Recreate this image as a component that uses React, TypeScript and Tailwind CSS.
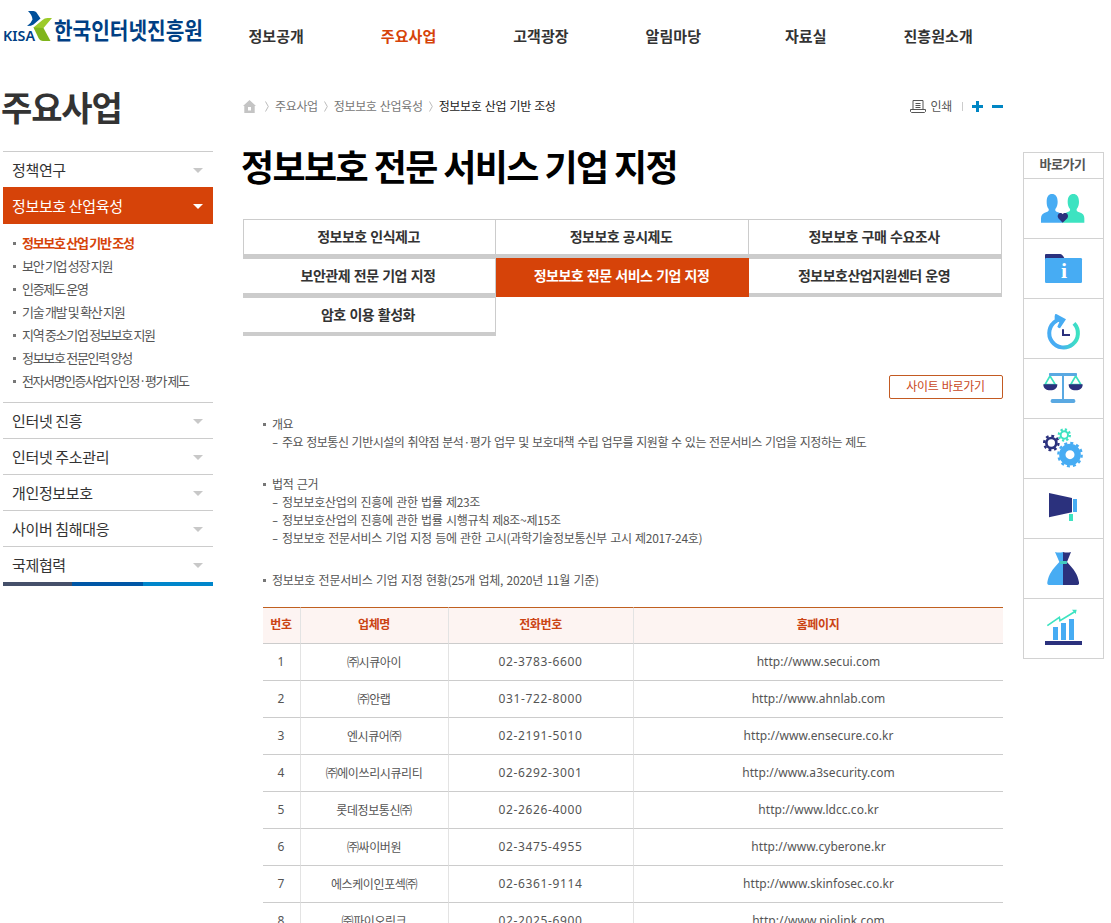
import type { ReactNode } from 'react';

const NAV = ['정보공개', '주요사업', '고객광장', '알림마당', '자료실', '진흥원소개'];

const SUB_MENU = [
  '정보보호 산업 기반 조성',
  '보안 기업 성장 지원',
  '인증제도 운영',
  '기술 개발 및 확산 지원',
  '지역 중소기업 정보보호 지원',
  '정보보호 전문인력 양성',
  '전자서명인증사업자 인정·평가 제도',
];

const SIDE_MENU = ['인터넷 진흥', '인터넷 주소관리', '개인정보보호', '사이버 침해대응', '국제협력'];

const COMPANIES = [
  { name: '㈜시큐아이', tel: '02-3783-6600', url: 'http://www.secui.com' },
  { name: '㈜안랩', tel: '031-722-8000', url: 'http://www.ahnlab.com' },
  { name: '엔시큐어㈜', tel: '02-2191-5010', url: 'http://www.ensecure.co.kr' },
  { name: '㈜에이쓰리시큐리티', tel: '02-6292-3001', url: 'http://www.a3security.com' },
  { name: '롯데정보통신㈜', tel: '02-2626-4000', url: 'http://www.ldcc.co.kr' },
  { name: '㈜싸이버원', tel: '02-3475-4955', url: 'http://www.cyberone.kr' },
  { name: '에스케이인포섹㈜', tel: '02-6361-9114', url: 'http://www.skinfosec.co.kr' },
  { name: '㈜파이오링크', tel: '02-2025-6900', url: 'http://www.piolink.com' },
];

function Logo() {
  return (
    <svg width="210" height="50" viewBox="0 0 210 50" className="block shrink-0">
      <path d="M28 11h5.500q2 0 3 1.500l4 6-7 6q-2 1.500-6.500 1.500 4-2.500 5.500-6.500 0-4-4.500-8.500z" fill="#00509a" />
      <path d="M52 18h-4.500q-3 0-5 2l-9 7.500 3.500 5 6.500-4.500z" fill="#9ccb2a" />
      <path d="M33.500 27.500 43.500 28 50.500 41h-7.500q-3 0-4.500-3z" fill="#7fb51c" />
      <text x="3" y="41" textLength="32" lengthAdjust="spacingAndGlyphs" fontSize="14" fontWeight="600" fill="#003f84" className="font-['Noto_Sans',sans-serif]">
        KISA
      </text>
      <text x="54" y="38.500" textLength="149" lengthAdjust="spacingAndGlyphs" fontSize="23" fontWeight="700" fill="#003f84">
        한국인터넷진흥원
      </text>
    </svg>
  );
}

function Header() {
  return (
    <header className="flex h-[74px]">
      <Logo />
      <nav className="flex h-[72px] items-center">
        {NAV.map((item) => (
          <a
            key={item}
            className={`w-[132.4px] text-center text-[15px] font-bold tracking-[0.1px] ${
              item === '주요사업' ? 'text-[#d64309]' : 'text-[#333]'
            }`}
          >
            {item}
          </a>
        ))}
      </nav>
    </header>
  );
}

function SideItem({ label, active = false }: { label: string; active?: boolean }) {
  return (
    <div
      className={`flex items-center justify-between pt-px pr-[10px] pl-[9px] text-[15px] tracking-[-0.35px] ${
        active ? 'h-[37px] bg-[#d64309] text-white' : 'h-9 border-t border-[#ccc] text-[#333]'
      }`}
    >
      <span>{label}</span>
      <svg width="10" height="5" viewBox="0 0 10 5" className={active ? 'text-white' : 'text-[#c8c8c8]'}>
        <path d="M0 0h10L5 5z" fill="currentColor" />
      </svg>
    </div>
  );
}

function Sidebar() {
  return (
    <aside className="w-[213px] shrink-0 pl-[3px]">
      <h2 className="-ml-[2px] h-[77px] pt-[8px] text-[34px] leading-[50px] font-bold tracking-[-1.1px] whitespace-nowrap text-[#333]">
        주요사업
      </h2>
      <SideItem label="정책연구" />
      <SideItem label="정보보호 산업육성" active />
      <ul className="pt-[7px] pb-[10px] pl-[10px]">
        {SUB_MENU.map((item, i) => (
          <li
            key={item}
            className={`flex h-[23px] items-center text-[13px] whitespace-nowrap ${
              i === 0 ? 'font-bold text-[#d64309]' : 'text-[#555]'
            } ${i === SUB_MENU.length - 1 ? 'tracking-[-1.45px]' : 'tracking-[-1.3px]'}`}
          >
            <span className="mt-[2px] mr-[6px] size-[3px] bg-[#777]" />
            {item}
          </li>
        ))}
      </ul>
      {SIDE_MENU.map((item) => (
        <SideItem key={item} label={item} />
      ))}
      <div className="flex h-1">
        <span className="w-[69px] bg-[#45506a]" />
        <span className="w-[71px] bg-[#0057a6]" />
        <span className="w-[70px] bg-[#0086cb]" />
      </div>
    </aside>
  );
}

function Chevron() {
  return (
    <svg width="4" height="11" viewBox="0 0 4 11" className="shrink-0" fill="none" stroke="#bbb">
      <path d="M0.5 0.5 3.3 5.5 0.5 10.5" />
    </svg>
  );
}

function Breadcrumb() {
  return (
    <div className="flex h-5 items-center text-[12px] tracking-[-0.35px] text-[#777] [word-spacing:1px]">
      <svg width="13" height="13" viewBox="0 0 13 13" fill="#c4c4c4">
        <path fillRule="evenodd" d="M6.5 0 13 6H11.7V13H1.3V6H0zM5 7v3.5h3V7z" />
      </svg>
      <span className="ml-[9px] flex items-center gap-[6px]">
        <Chevron />
        <span>주요사업</span>
        <Chevron />
        <span>정보보호 산업육성</span>
        <Chevron />
        <span className="text-[#222]">정보보호 산업 기반 조성</span>
      </span>
      <span className="ml-auto flex items-center">
        <svg width="16" height="13" viewBox="0 0 16 13" fill="none" stroke="#555">
          <path d="M3 9.5V.5h10v9M.5 9.5h15v2l-1 1h-13l-1-1zM5.5 3.5h5M5.5 5.5h5M5.5 7.5h5" />
        </svg>
        <span className="ml-[5px] text-[#555]">인쇄</span>
        <span className="ml-[10px] h-[9px] w-px bg-[#ccc]" />
        <svg width="31" height="11" viewBox="0 0 31 11" className="ml-[9px]" fill="#0086c4">
          <path d="M4 0h3v4h4v3H7v4H4V7H0V4h4zM20 4h11v3H20z" />
        </svg>
      </span>
    </div>
  );
}

function Tabs() {
  const base = 'flex h-[39px] items-center justify-center border-t border-r border-b-4 border-[#ccc] pr-[2px] pb-[2px]';
  return (
    <div className="grid w-[759px] grid-cols-3 text-[14px] font-bold tracking-[-0.5px] text-[#333] [word-spacing:1px]">
      <a className={`${base} border-l`}>정보보호 인식제고</a>
      <a className={base}>정보보호 공시제도</a>
      <a className={base}>정보보호 구매 수요조사</a>
      <a className={base}>보안관제 전문 기업 지정</a>
      <a className="flex h-[39px] items-center justify-center bg-[#d64309] pr-[2px] pb-[4px] text-white">
        정보보호 전문 서비스 기업 지정
      </a>
      <a className={base}>정보보호산업지원센터 운영</a>
      <a className={base}>암호 이용 활성화</a>
    </div>
  );
}

function Section({ title, lines = [], className = '' }: { title: string; lines?: string[]; className?: string }) {
  return (
    <li className={`flex ${className}`}>
      <span className="mt-[8px] mr-[6px] size-[3px] shrink-0 bg-[#777]" />
      <div>
        <p>{title}</p>
        {lines.map((line) => (
          <p key={line}>
            <span className="inline-block w-[10px] origin-left scale-x-150">-</span>
            {line}
          </p>
        ))}
      </div>
    </li>
  );
}

function CompanyTable() {
  return (
    <table className="mt-[18px] ml-5 w-[740px] table-fixed border-separate border-spacing-0 text-center text-[12px] text-[#555]">
      <colgroup>
        <col className="w-[38px]" />
        <col className="w-[148px]" />
        <col className="w-[185px]" />
        <col />
      </colgroup>
      <thead>
        <tr className="h-[37px] bg-[#fdf4f2] tracking-[-0.4px] text-[#cb4314]">
          {['번호', '업체명', '전화번호', '홈페이지'].map((h) => (
            <th
              key={h}
              className="border-t border-r border-b border-t-[#c0601f] border-r-[#e3e3e3] border-b-[#ccc] p-0 pr-px pb-[4px] font-bold last:border-r-0"
            >
              {h}
            </th>
          ))}
        </tr>
      </thead>
      <tbody>
        {COMPANIES.map((c, i) => (
          <tr key={c.tel} className="h-[37px] *:border-b *:border-[#ccc] *:p-0">
            <td className="border-r border-r-[#e3e3e3]! pr-px! font-['Noto_Sans',sans-serif]">{i + 1}</td>
            <td className="border-r border-r-[#e3e3e3]! pr-px! tracking-[-0.4px]">{c.name}</td>
            <td className="border-r border-r-[#e3e3e3]! pr-px! font-['Noto_Sans',sans-serif] tracking-[0.65px]">{c.tel}</td>
            <td className="font-['Noto_Sans',sans-serif] tracking-[0.04px]">{c.url}</td>
          </tr>
        ))}
      </tbody>
    </table>
  );
}

function Content() {
  return (
    <main className="ml-[30px] w-[760px] shrink-0 pt-[22px]">
      <Breadcrumb />
      <h1 className="-ml-[2px] h-[103px] pt-[22px] text-[36px] leading-[54px] font-bold tracking-[-1.6px] whitespace-nowrap text-black">
        정보보호 전문 서비스 기업 지정
      </h1>
      <Tabs />
      <div className="mt-[39px] flex justify-end">
        <a className="flex h-6 w-[114px] items-center justify-center rounded-[2px] border border-[#c35a22] pr-px pb-[2px] text-[12px] tracking-[-0.3px] text-[#c9471b] [word-spacing:1px]">
          사이트 바로가기
        </a>
      </div>
      <ul className="mt-4 ml-5 space-y-6 text-[12px] leading-[18px] whitespace-nowrap text-[#555] [word-spacing:1px]">
        <Section
          className="tracking-[-0.5px]"
          title="개요"
          lines={['주요 정보통신 기반시설의 취약점 분석·평가 업무 및 보호대책 수립 업무를 지원할 수 있는 전문서비스 기업을 지정하는 제도']}
        />
        <Section
          className="tracking-[-0.3px]"
          title="법적 근거"
          lines={[
            '정보보호산업의 진흥에 관한 법률 제23조',
            '정보보호산업의 진흥에 관한 법률 시행규칙 제8조~제15조',
            '정보보호 전문서비스 기업 지정 등에 관한 고시(과학기술정보통신부 고시 제2017-24호)',
          ]}
        />
        <Section className="tracking-[-0.25px]" title="정보보호 전문서비스 기업 지정 현황(25개 업체, 2020년 11월 기준)" />
      </ul>
      <CompanyTable />
    </main>
  );
}

const NAVY = '#2b317d';
const BLUE = '#47acf3';
const TEAL = '#3de3c1';

function Gear({ x, y, r, width, teeth, color }: { x: number; y: number; r: number; width: number; teeth: number; color: string }) {
  // solid ring plus a dashed ring outside it for the teeth
  return (
    <g fill="none" stroke={color}>
      <circle cx={x} cy={y} r={r} strokeWidth={width} />
      <circle cx={x} cy={y} r={r + width / 2 + 2.5} strokeWidth="7" pathLength={teeth * 2} strokeDasharray="1 1" />
    </g>
  );
}

const QUICK_ICONS: ReactNode[] = [
  <>
    <path d="M51 131v-13c0-10 6-16 17-19 6-2 7-5 6-9-5-6-6-14-6-22 0-15 6-23 16-23s17 8 17 23c0 8-2 16-7 22-1 5 1 8 8 10 11 3 14 9 14 18v13z" fill={BLUE} />
    <path d="M116 131v-13c0-10 6-16 15-19 7-2 8-5 7-9-5-6-7-14-7-22 0-15 7-23 17-23s17 8 17 23c0 8-2 16-7 22-1 5 1 8 8 10 11 3 15 9 15 18v13z" fill={TEAL} />
    <path d="M116 131 103 118c-4-6-2-14 5-16 4-1 7 1 8 4 2-4 6-5 10-4 6 2 8 10 4 16z" fill={NAVY} />
  </>,
  <>
    <path d="M63 62V48q0-3 3-3h43q5 0 12 12v8z" fill={NAVY} />
    <rect x="63" y="57" width="111" height="75" rx="4" fill={BLUE} />
    <text x="120" y="117" textAnchor="middle" fontSize="66" fontWeight="700" fill="#fff" className="font-['Liberation_Serif',serif]">
      i
    </text>
  </>,
  <>
    <defs>
      <linearGradient id="ring" x1="0" x2="1">
        <stop offset="0.35" stopColor={BLUE} />
        <stop offset="1" stopColor={TEAL} />
      </linearGradient>
    </defs>
    <path d="M150 73a43 43 0 1 1-54-7l13-6" fill="none" stroke="url(#ring)" strokeWidth="12" />
    <path d="M94 45q4-1 7 2l25 14-18 27q-6-1-8-5l6-14-14-8q-1-12 2-16z" fill={BLUE} />
    <path d="M117 91v17h21" fill="none" stroke={NAVY} strokeWidth="6" />
  </>,
  <>
    <path d="M78 51 63 77h31L78 51M155 51l-15 26h31l-16-26" fill="none" stroke={TEAL} strokeWidth="5" />
    <rect x="75" y="42" width="84" height="9" rx="2" fill="#5aa9e2" />
    <path d="M114 48h6v73h-6z" fill="#5aa9e2" />
    <rect x="80" y="120" width="74" height="12" rx="5" fill="#5aa9e2" />
    <path d="M58 76h42c0 12-8 18-21 18s-21-6-21-18zM134 76h42c0 12-8 18-21 18s-21-6-21-18z" fill={NAVY} />
  </>,
  <>
    <Gear x={121} y={48} r={11} width={6} teeth={8} color={TEAL} />
    <Gear x={82} y={72} r={15} width={8} teeth={8} color={NAVY} />
    <Gear x={138} y={107} r={23} width={19} teeth={12} color={BLUE} />
  </>,
  <>
    <path d="M75 42 144 57v43l-69 15z" fill={NAVY} />
    <path d="M147 60h12v39h-12z" fill={BLUE} />
    <path d="M135 105h12v21h-12z" fill={TEAL} />
  </>,
  <>
    <path d="M93 39q12 3 24 0v99H75q-6 0-5-8c4-25 15-38 36-61z" fill={BLUE} />
    <path d="M141 39q-12 3-24 0v99h43q6 0 5-8c-4-25-15-38-36-61z" fill={NAVY} />
    <rect x="108" y="66" width="21" height="9" rx="2" fill="#43cdbf" />
  </>,
  <>
    <path d="M87 84h15v39H87zM111 72h15v51h-15zM135 60h15v63h-15z" fill={BLUE} />
    <path d="M63 126h111v12H63z" fill={NAVY} />
    <path d="M70 80 106 55l2 10 44-27" fill="none" stroke={TEAL} strokeWidth="5" />
    <path d="M144 32h14l-3 13z" fill={TEAL} />
  </>,
];

function QuickMenu() {
  return (
    <aside className="mt-[78px] ml-5 w-[81px] shrink-0 self-start border border-[#d2d2d2]">
      <h3 className="flex h-[25px] items-center justify-center pr-[2px] pb-[4px] text-[13px] font-bold tracking-[-0.5px] text-[#555]">
        바로가기
      </h3>
      {QUICK_ICONS.map((icon, i) => (
        <a key={i} className="block h-[60px] border-t border-[#d2d2d2]">
          <svg width="79" height="59" viewBox="0 0 237 177" className="block">
            {icon}
          </svg>
        </a>
      ))}
    </aside>
  );
}

export default function App() {
  return (
    <div className="h-[923px] w-[1111px] overflow-hidden bg-white font-['Noto_Sans_CJK_KR',sans-serif]">
      <Header />
      <div className="flex">
        <Sidebar />
        <Content />
        <QuickMenu />
      </div>
    </div>
  );
}
